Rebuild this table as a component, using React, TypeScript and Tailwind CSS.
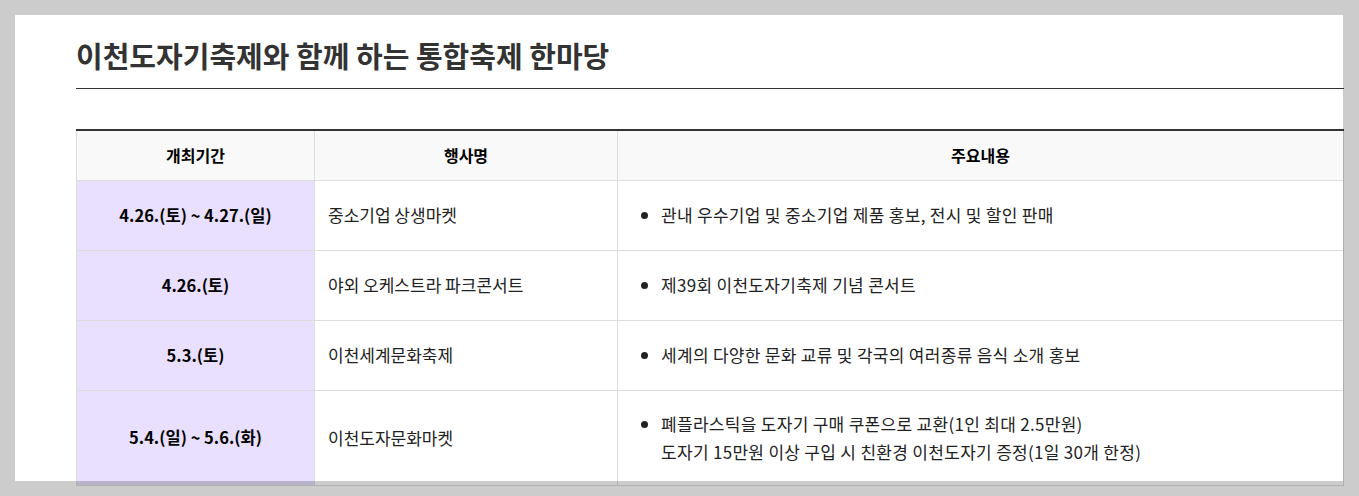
import type { ReactElement } from "react";

interface FestivalRow {
  period: string;
  name: string;
  details: string[];
  tall?: boolean;
}

const rows: FestivalRow[] = [
  {
    period: "4.26.(토) ~ 4.27.(일)",
    name: "중소기업 상생마켓",
    details: ["관내 우수기업 및 중소기업 제품 홍보, 전시 및 할인 판매"],
  },
  {
    period: "4.26.(토)",
    name: "야외 오케스트라 파크콘서트",
    details: ["제39회 이천도자기축제 기념 콘서트"],
  },
  {
    period: "5.3.(토)",
    name: "이천세계문화축제",
    details: ["세계의 다양한 문화 교류 및 각국의 여러종류 음식 소개 홍보"],
  },
  {
    period: "5.4.(일) ~ 5.6.(화)",
    name: "이천도자문화마켓",
    details: [
      "폐플라스틱을 도자기 구매 쿠폰으로 교환(1인 최대 2.5만원)",
      "도자기 15만원 이상 구입 시 친환경 이천도자기 증정(1일 30개 한정)",
    ],
    tall: true,
  },
];

export default function App(): ReactElement {
  return (
    <div className="relative h-[496px] w-[1359px] overflow-hidden bg-white font-['Noto_Sans_CJK_KR','Noto_Sans',sans-serif] text-[#222]">
      <div className="pl-[76px] pt-[35px]">
        <h2 className="w-[1268px] border-b border-[#333] pb-[13px] text-[29px] font-bold leading-[40px] text-[#333]">
          이천도자기축제와 함께 하는 통합축제 한마당
        </h2>

        <table className="mt-[40px] w-[1268px] table-fixed border-collapse border-t-2 border-t-[#333]">
          <colgroup>
            <col className="w-[238px]" />
            <col className="w-[303px]" />
            <col />
          </colgroup>
          <thead>
            <tr className="h-[50px] bg-[#f9f9f9]">
              <th className="border border-t-0 border-[#ddd] text-[16px] font-bold text-black">개최기간</th>
              <th className="border border-t-0 border-[#ddd] text-[16px] font-bold text-black">행사명</th>
              <th className="border border-t-0 border-[#ddd] text-[16px] font-bold text-black">주요내용</th>
            </tr>
          </thead>
          <tbody>
            {rows.map(row => (
              <tr key={row.name} className={row.tall ? "h-[95px]" : "h-[70px]"}>
                <td className="border border-[#ddd] bg-[#e8e0fe] text-center text-[16.5px] font-bold text-black">
                  {row.period}
                </td>
                <td className="border border-[#ddd] px-[13px] text-[17px]">{row.name}</td>
                <td className="border border-[#ddd] px-[13px] text-[17px] tracking-[0.3px]">
                  <ul className="list-disc pl-[30px] leading-[28px]">
                    <li>
                      {row.details.map((line, i) => (
                        <span key={line}>
                          {i > 0 ? <br /> : null}
                          {line}
                        </span>
                      ))}
                    </li>
                  </ul>
                </td>
              </tr>
            ))}
          </tbody>
        </table>
      </div>

      {/* modal backdrop: dims everything outside the panel */}
      <div className="pointer-events-none absolute left-[15px] top-[15px] h-[466px] w-[1328px] shadow-[0_0_0_3000px_rgba(0,0,0,0.2)]" />
    </div>
  );
}
